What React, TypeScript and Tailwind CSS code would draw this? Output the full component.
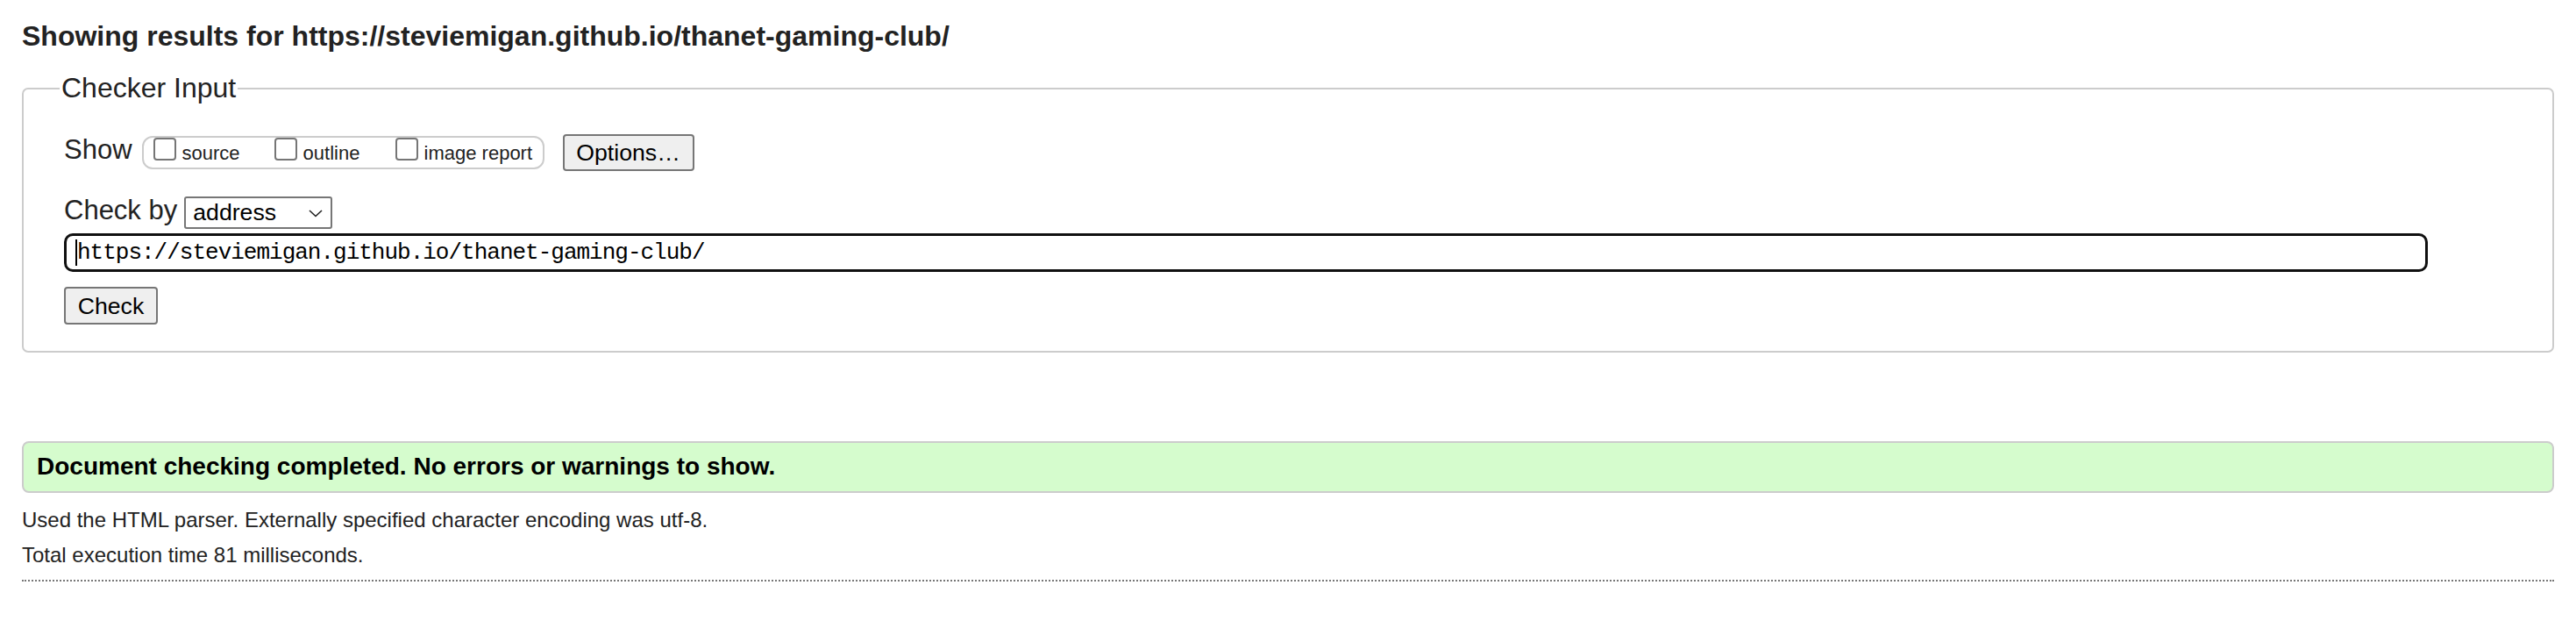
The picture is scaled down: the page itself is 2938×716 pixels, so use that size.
import React from "react";

function Box({ label, labelWidth }: { label: string; labelWidth: string }) {
  return (
    <div className="flex items-start">
      <span className="block w-[26px] h-[26px] border-2 border-[#767676] rounded-[4px] bg-white shrink-0" />
      <span className={`block ml-[7px] mt-[5px] text-[22px] leading-[26px] text-[#222] whitespace-nowrap ${labelWidth}`}>{label}</span>
    </div>
  );
}

export default function App() {
  return (
    <div className="min-h-screen bg-white px-[25px] pt-[23px] font-['Liberation_Sans',Arial,sans-serif] text-[#222]">
      <h2 className="text-[32px] leading-[36px] font-bold text-[#222] whitespace-nowrap">
        Showing results for https://steviemigan.github.io/thanet-gaming-club/
      </h2>

      <fieldset className="mt-[23px] border-2 border-[#cccccc] rounded-[7px] pl-[41px] pr-[41px] pt-[33px] pb-[30px] m-0 min-w-0">
        <legend className="ml-[0px] px-[2px] pb-[2px] text-[32px] leading-[36px] text-[#222]">Checker Input</legend>

        <div className="pl-[5px]">
          <div className="flex items-center h-[42px]">
            <span className="text-[31px] leading-[36px] mb-[6px] text-[#222]">Show</span>
            <div className="ml-[11px] h-[38px] border-2 border-[#cccccc] rounded-[12px] flex items-start pl-[11px] pr-[11px] bg-white">
              <Box label="source" labelWidth="w-[64px]" />
              <div className="w-[41px]" />
              <Box label="outline" labelWidth="w-[64px]" />
              <div className="w-[41px]" />
              <Box label="image report" labelWidth="w-[124px]" />
            </div>
            <div className="ml-[21px] w-[150px] h-[42px] bg-[#efefef] border-2 border-[#767676] rounded-[4px] flex items-center justify-center text-[26.67px] leading-[30px] text-black">
              Options…
            </div>
          </div>

          <div className="mt-[28px] flex items-center h-[38px]">
            <span className="text-[31px] leading-[36px] mb-[5px] text-[#222]">Check by</span>
            <div className="ml-[8px] w-[169px] h-[37px] border-2 border-[#767676] rounded-[3px] bg-white flex items-center pl-[8px] pr-[9px]">
              <span className="text-[26.67px] leading-[30px] text-black flex-1">address</span>
              <svg width="16" height="9" viewBox="0 0 16 9" className="mt-[3px]">
                <polyline points="1,1 8,7.5 15,1" fill="none" stroke="#222" strokeWidth="1.6" />
              </svg>
            </div>
          </div>

          <div className="mt-[5px] w-[2696px] h-[44px] border-[3px] border-[#101010] rounded-[10px] bg-white flex items-center pl-[10px]">
            <span className="inline-block w-[2px] h-[30px] bg-black" />
            <span className="font-['Liberation_Mono','DejaVu_Sans_Mono',monospace] text-[26px] leading-[30px] tracking-[-1px] text-black whitespace-nowrap">
              https://steviemigan.github.io/thanet-gaming-club/
            </span>
          </div>

          <div className="mt-[17px] w-[107px] h-[43px] bg-[#efefef] border-2 border-[#767676] rounded-[4px] flex items-center justify-center text-[26.67px] leading-[30px] text-black">
            Check
          </div>
        </div>
      </fieldset>

      <div className="mt-[101px] h-[59px] border-2 border-[#cccccc] rounded-[8px] bg-[#d5fccd] pl-[15px] pt-[11px]">
        <p className="text-[28px] leading-[32px] font-bold text-black whitespace-nowrap">
          Document checking completed. No errors or warnings to show.
        </p>
      </div>

      <p className="mt-[17px] text-[24px] leading-[28px] text-[#222]">
        Used the HTML parser. Externally specified character encoding was utf-8.
      </p>
      <p className="mt-[12px] text-[24px] leading-[28px] text-[#222]">Total execution time 81 milliseconds.</p>
      <div className="mt-[14px] border-t-2 border-dotted border-[#777]" />
    </div>
  );
}
